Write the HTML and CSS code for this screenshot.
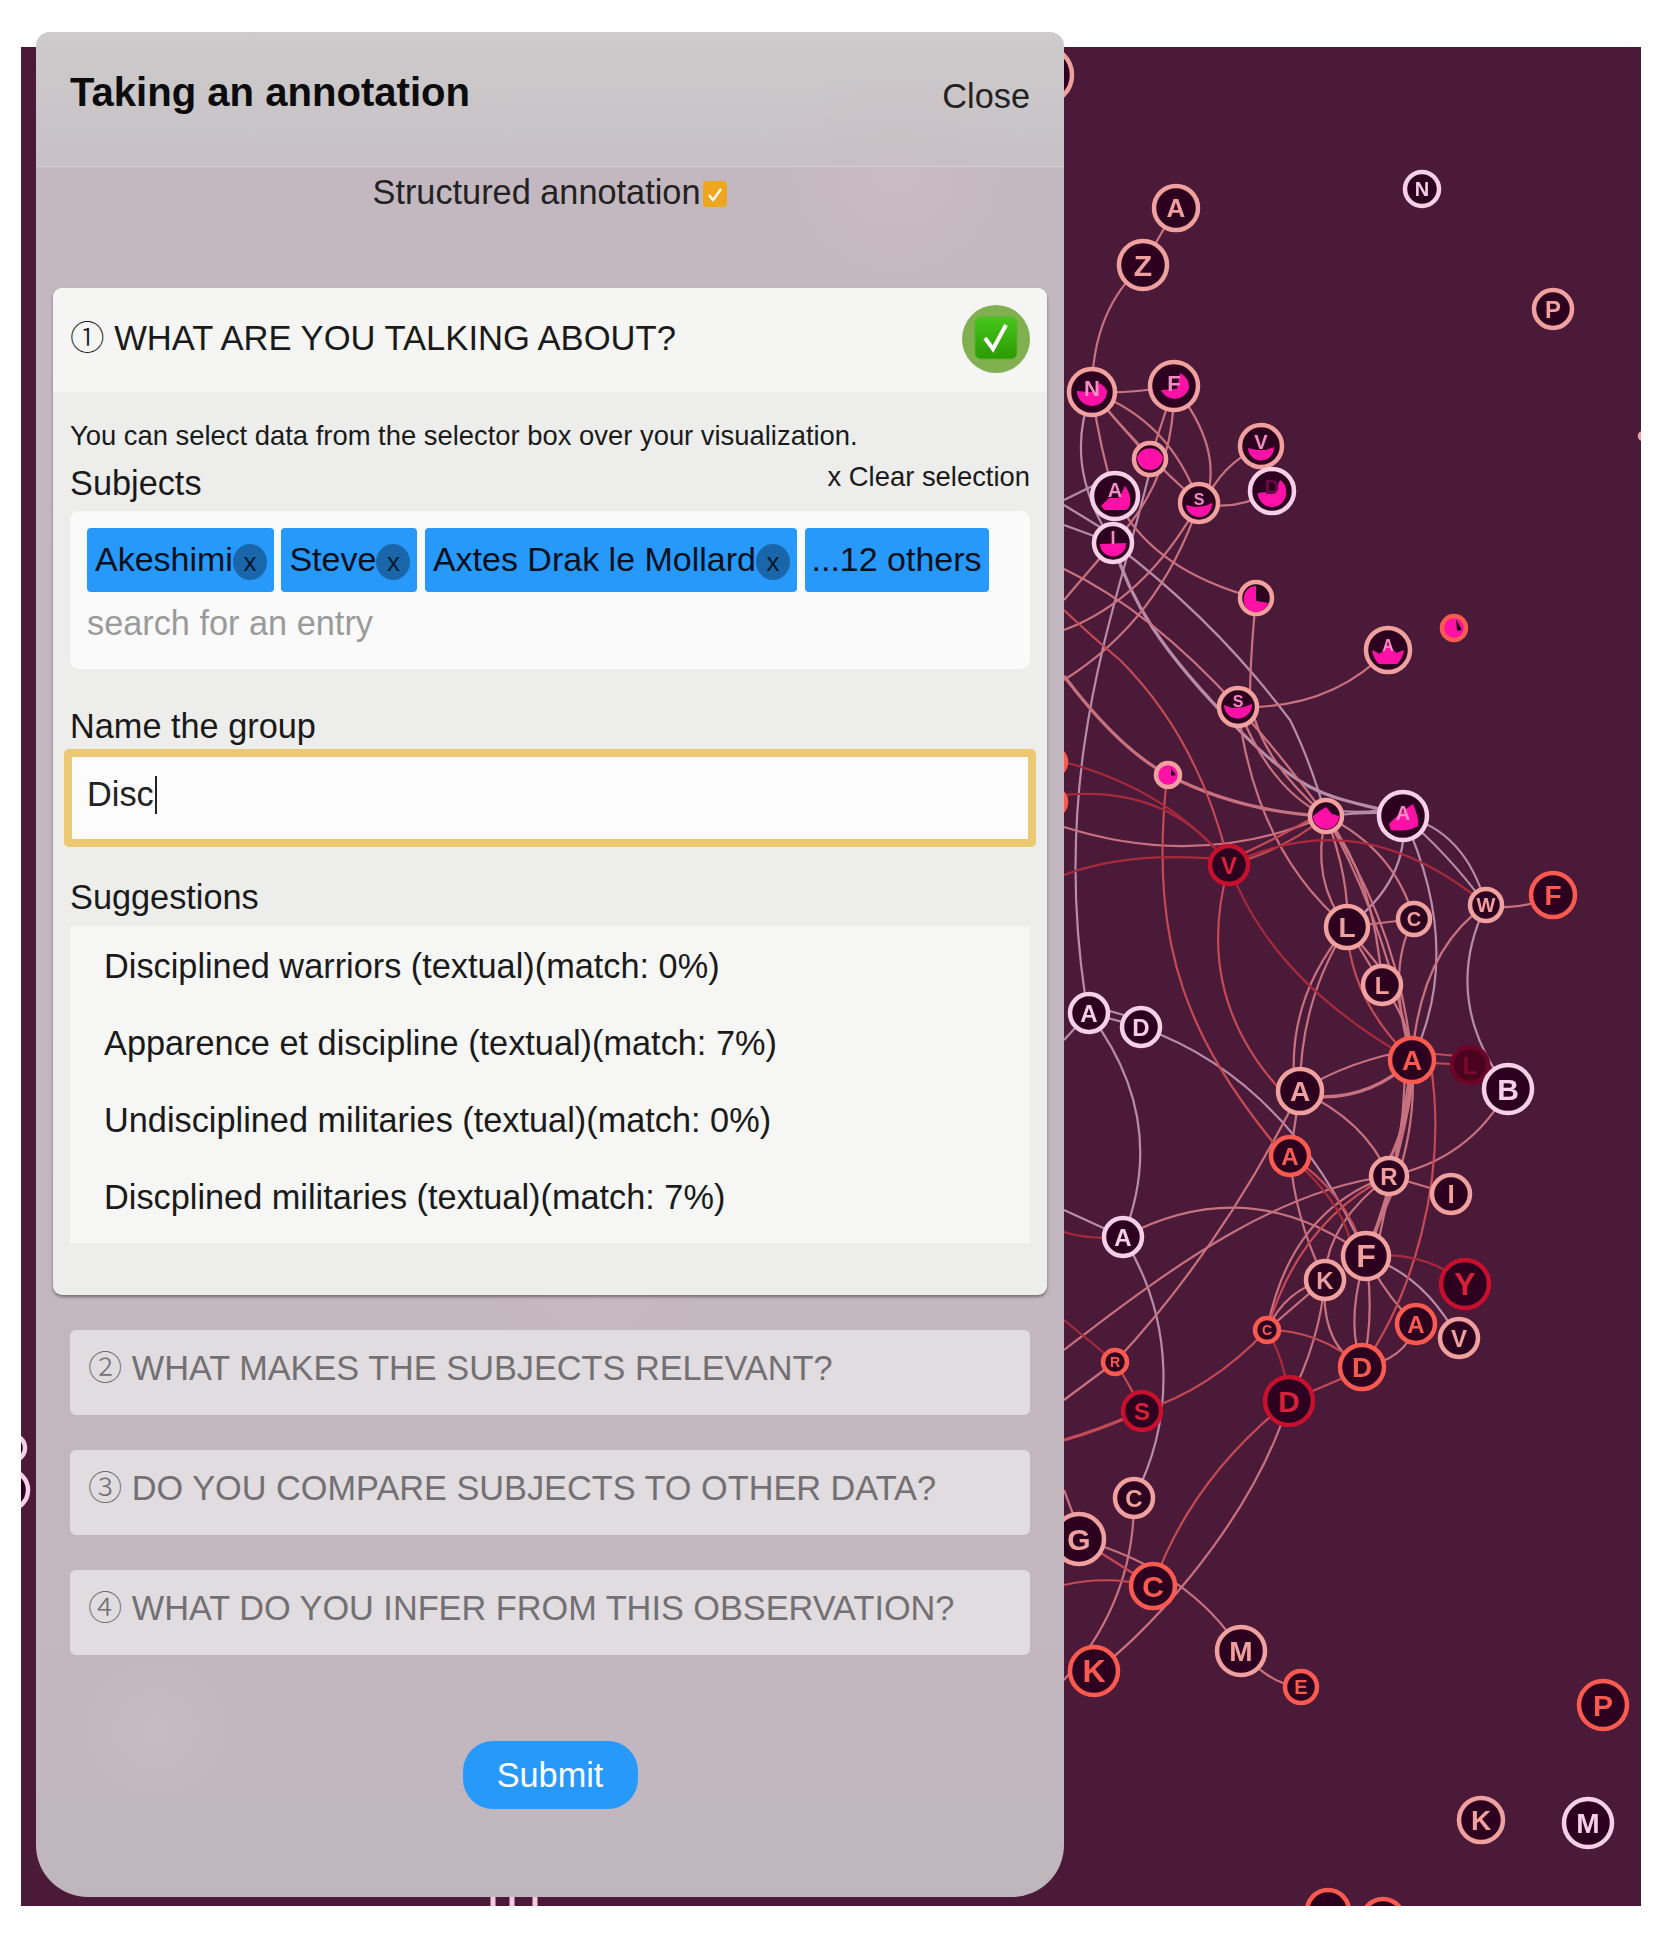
FILE: index.html
```html
<!DOCTYPE html>
<html lang="en">
<head>
<meta charset="utf-8">
<title>Taking an annotation</title>
<link rel="stylesheet" href="styles.css">
</head>
<body>
<main class="stage">
  <svg class="graph" viewBox="21 47 1620 1859" width="1620" height="1859" aria-hidden="true">
    <g class="edges pale-e">
      <path d="M1092 392Q1062 465 1113 543"/>
      <path class="thick" d="M1113 543C1130 600 1160 650 1238 729S1340 795 1403 816"/>
      <path d="M1064 1040L1089 1013"/>
      <path d="M1064 500L1115 475"/>
      <path d="M1064 525L1113 543"/>
      <path d="M1064 505L1113 535"/>
      <path d="M1089 1013Q1170 1120 1123 1237"/>
      <path d="M1141 1027Q1290 1080 1366 1256"/>
      <path d="M1089 1005L1141 1020"/>
      <path d="M1089 1013L1141 1027"/>
      <path d="M1123 1237C1175 1320 1175 1420 1134 1498"/>
      <path d="M1403 816Q1410 880 1347 927"/>
      <path d="M1403 816Q1465 830 1486 905"/>
      <path d="M1403 816Q1445 850 1486 905"/>
      <path d="M1403 816Q1465 950 1412 1060"/>
      <path d="M1326 816Q1385 810 1403 816"/>
      <path d="M1326 810Q1370 815 1403 806"/>
      <path d="M1486 905Q1440 1000 1508 1089"/>
      <path d="M1366 1256Q1425 1275 1459 1340"/>
      <path d="M1113 543Q1215 620 1290 720Q1310 760 1326 816"/>
      <path d="M1123 1237L1064 1210"/>
      <path d="M1150 470C1120 600 1050 760 1085 995"/>
    </g>
    <g class="edges pink-e">
      <path d="M1176 208L1143 265"/>
      <path d="M1143 265Q1092 310 1092 392"/>
      <path d="M1092 392Q1130 394 1174 386"/>
      <path d="M1092 392Q1170 420 1199 503"/>
      <path d="M1092 392L1150 459"/>
      <path d="M1092 392Q1140 450 1199 503"/>
      <path d="M1092 392Q1100 450 1115 496"/>
      <path d="M1174 386L1150 459"/>
      <path d="M1174 386Q1175 480 1113 543"/>
      <path d="M1174 386Q1225 450 1205 503"/>
      <path d="M1261 446Q1220 465 1205 503"/>
      <path d="M1272 491Q1235 512 1199 503"/>
      <path d="M1113 543L1064 600"/>
      <path d="M1199 503Q1160 620 1064 680"/>
      <path d="M1199 503Q1145 600 1064 630"/>
      <path d="M1115 496Q1150 570 1256 598"/>
      <path d="M1256 598Q1250 660 1250 700Q1260 760 1326 816"/>
      <path d="M1388 650Q1330 710 1238 707"/>
      <path d="M1064 569Q1150 610 1238 707"/>
      <path class="thick" d="M1168 775Q1240 812 1326 816"/>
      <path class="thick" d="M1064 676Q1120 750 1168 775"/>
      <path d="M1064 827Q1200 870 1326 816"/>
      <path d="M1238 707Q1255 850 1347 927"/>
      <path d="M1238 707Q1270 790 1326 816"/>
      <path d="M1238 707Q1285 760 1326 816"/>
      <path d="M1326 816Q1310 880 1347 927"/>
      <path d="M1326 816Q1395 850 1414 919"/>
      <path d="M1326 816Q1350 880 1347 927"/>
      <path d="M1326 816Q1375 880 1382 985"/>
      <path d="M1326 816Q1400 930 1412 1060"/>
      <path d="M1326 816Q1385 920 1412 1060"/>
      <path d="M1347 927L1414 919"/>
      <path d="M1347 927L1382 985"/>
      <path d="M1347 927L1382 970"/>
      <path d="M1347 927Q1285 1000 1295 1091"/>
      <path d="M1347 927Q1300 1000 1300 1091"/>
      <path d="M1414 919Q1385 970 1412 1060"/>
      <path d="M1382 985Q1410 1020 1412 1060"/>
      <path d="M1486 905Q1420 950 1412 1060"/>
      <path d="M1486 905Q1520 912 1553 895"/>
      <path d="M1300 1091Q1350 1060 1412 1050"/>
      <path class="thick" d="M1300 1095Q1365 1105 1412 1060"/>
      <path d="M1300 1091Q1365 1120 1389 1176"/>
      <path d="M1300 1091L1290 1156"/>
      <path d="M1508 1089Q1470 1160 1389 1176"/>
      <path d="M1389 1176L1451 1194"/>
      <path class="thick" d="M1412 1060Q1410 1130 1380 1176"/>
      <path d="M1416 1060Q1405 1150 1366 1256"/>
      <path d="M1405 1060Q1405 1170 1366 1256"/>
      <path d="M1412 1060Q1420 1160 1360 1256"/>
      <path d="M1412 1060Q1395 1170 1375 1256"/>
      <path d="M1123 1237Q1250 1170 1366 1256"/>
      <path d="M1290 1156Q1295 1220 1325 1280"/>
      <path d="M1300 1091Q1220 1250 1115 1362"/>
      <path d="M1389 1176C1280 1190 1180 1260 1064 1350"/>
      <path d="M1389 1176Q1290 1210 1267 1330"/>
      <path d="M1389 1176Q1325 1225 1325 1280"/>
      <path d="M1325 1280L1267 1330"/>
      <path d="M1325 1280Q1285 1290 1267 1330"/>
      <path d="M1366 1256Q1385 1295 1416 1325"/>
      <path d="M1366 1256Q1345 1320 1362 1367"/>
      <path d="M1366 1256Q1375 1320 1362 1367"/>
      <path d="M1325 1280Q1320 1345 1362 1367"/>
      <path d="M1325 1280Q1320 1340 1289 1401"/>
      <path d="M1362 1367Q1405 1360 1416 1325"/>
      <path d="M1289 1401C1250 1530 1130 1650 1094 1671"/>
      <path d="M1134 1498Q1135 1600 1064 1680"/>
      <path d="M1079 1539Q1190 1570 1241 1651"/>
      <path d="M1241 1651Q1270 1685 1301 1687"/>
      <path d="M1064 1400L1115 1362"/>
      <path d="M1064 1490L1079 1530"/>
    </g>
    <g class="edges coral-e">
      <path d="M1120 660Q1200 740 1229 865"/>
      <path d="M1064 610Q1090 635 1120 660"/>
      <path d="M1229 865Q1285 850 1326 816"/>
      <path d="M1229 860Q1285 835 1326 810"/>
      <path d="M1229 865Q1190 1000 1290 1100"/>
      <path d="M1166 786C1150 950 1190 1040 1276 1146"/>
      <path d="M1347 927Q1350 1000 1412 1060"/>
      <path d="M1290 1156Q1345 1190 1366 1256"/>
      <path d="M1430 1060C1450 1180 1410 1300 1362 1367"/>
      <path d="M1267 1330Q1320 1330 1362 1367"/>
      <path d="M1267 1330Q1210 1390 1142 1411"/>
      <path class="thick" d="M1142 1411Q1100 1430 1064 1440"/>
      <path d="M1289 1401L1362 1370"/>
      <path d="M1115 1362Q1130 1385 1142 1411"/>
      <path d="M1289 1401Q1190 1480 1153 1586"/>
      <path d="M1079 1539L1153 1586"/>
      <path d="M1153 1586Q1105 1575 1064 1585"/>
      <path d="M1412 1052L1470 1057"/>
      <path d="M1412 1062L1470 1065"/>
      <path d="M1389 1176Q1300 1220 1267 1330"/>
    </g>
    <g class="edges red-e">
      <path d="M1064 762Q1170 790 1229 865"/>
      <path d="M1064 795Q1170 785 1229 865"/>
      <path d="M1064 875Q1130 850 1229 860"/>
      <path d="M1229 865Q1360 800 1486 905"/>
      <path d="M1229 865Q1270 980 1412 1060"/>
      <path d="M1366 1256Q1425 1250 1465 1284"/>
      <path d="M1267 1330Q1285 1360 1289 1401"/>
      <path d="M1064 1320L1115 1362"/>
      <path d="M1123 1237Q1090 1240 1064 1232"/>
      <path d="M1290 1156Q1340 1200 1350 1240"/>
    </g>
    <g class="bars">
      <path d="M493 1890V1906"/>
      <path d="M512 1890V1906"/>
      <path d="M535 1890V1906"/>
    </g>
    <g class="nodes">
      <g class="n pink" transform="translate(1044 75)"><circle r="28"/></g>
      <g class="n coral" transform="translate(1052 762)"><circle r="14"/></g>
      <g class="n coral" transform="translate(1052 802)"><circle r="14"/></g>
      <g class="n pale" transform="translate(12 1448)"><circle r="13"/></g>
      <g class="n pale" transform="translate(8 1490)"><circle r="20"/></g>
      <g class="n pink" transform="translate(1643 436)"><circle r="3"/></g>
      <g class="n coral" transform="translate(1328 1911)"><circle r="21"/></g>
      <g class="n coral" transform="translate(1383 1920)"><circle r="21"/></g>

      <g class="n pink" transform="translate(1176 208)"><circle r="22"/><text font-size="26">A</text></g>
      <g class="n pink" transform="translate(1143 265)"><circle r="24"/><text font-size="30">Z</text></g>
      <g class="n pale" transform="translate(1422 189)"><circle r="17"/><text font-size="20">N</text></g>
      <g class="n pink" transform="translate(1553 309)"><circle r="19"/><text font-size="24">P</text></g>
      <g class="n pink" transform="translate(1092 392)"><circle r="23"/><path class="pie" d="M-15 -1A15 15 0 0 0 15 -1A15 15 0 0 0 7 -9L4 0H-4Z"/><text class="over" font-size="22" y="-4">N</text></g>
      <g class="n pink" transform="translate(1174 386)"><circle r="24"/><path class="pie" d="M-13 4L3 3L6 -13A15 15 0 0 1 15 2A15 15 0 0 1 -13 4Z"/><text class="over" font-size="22" y="-3">F</text></g>
      <g class="n pink" transform="translate(1261 446)"><circle r="21"/><path class="pie" d="M-13 2L-4 4L5 4L13 1A13 13 0 0 1 -13 2Z"/><text class="over" font-size="20" y="-4">V</text></g>
      <g class="n pale" transform="translate(1272 491)"><circle r="22"/><path class="pie" d="M-14 2L4 0L8 -11A14 14 0 0 1 14 2A14 14 0 0 1 -14 2Z"/><text class="over dark" font-size="20" y="-4">D</text></g>
      <g class="n pink" transform="translate(1150 459)"><circle r="16"/><path class="pie" d="M-13 -2A13 13 0 1 0 13 -2A14 14 0 0 0 -13 -2Z"/></g>
      <g class="n pale" transform="translate(1115 496)"><circle r="23"/><path class="pie" d="M-14 10L-6 2L4 2L10 -10Q16 -2 15 6Q15 12 11 14H-10Z"/><text class="over" font-size="20" y="-6">A</text></g>
      <g class="n pink" transform="translate(1199 503)"><circle r="19"/><path class="pie" d="M-13 2L-4 4L6 3L13 0A13 13 0 0 1 -13 2Z"/><text class="over" font-size="16" y="-4">S</text></g>
      <g class="n pale" transform="translate(1113 543)"><circle r="19"/><path class="pie" d="M-13 1L13 0A13 13 0 0 1 -13 1Z"/><text class="over" font-size="18" y="-5">I</text></g>
      <g class="n pink" transform="translate(1256 598)"><circle r="16"/><path class="pie" d="M-12 -1A12 12 0 1 0 12 5L0 3L0 -12A12 12 0 0 0 -12 -1Z"/></g>
      <g class="n coral" transform="translate(1454 628)"><circle class="fp" r="12"/><path class="wedge" d="M2 -9L8 2L3 3Z"/></g>
      <g class="n pink" transform="translate(1388 650)"><circle r="22"/><path class="pie" d="M-16 0L-8 4L0 -6L8 3L16 0Q14 10 9 14H-9Q-14 10 -16 0Z"/><text class="over" font-size="16" y="-5">A</text></g>
      <g class="n pink" transform="translate(1238 707)"><circle r="19"/><path class="pie" d="M-14 -2L-6 1L6 0L14 -3A14 14 0 0 1 -14 -2Z"/><text class="over" font-size="16" y="-6">S</text></g>
      <g class="n pink" transform="translate(1168 775)"><circle class="fp" r="12"/><path class="wedge" d="M3 -7L8 0L3 1Z"/></g>
      <g class="n pink" transform="translate(1326 816)"><circle r="16"/><path class="pie" d="M-13 0L-5 -6L0 -9L6 -2L13 0A13 13 0 0 1 -13 0Z"/></g>
      <g class="n pale" transform="translate(1403 816)"><circle r="24"/><path class="pie" d="M-14 8L-4 -2L10 -12Q16 2 15 10Q5 16 -12 14Z"/><text class="over" font-size="20" y="-3">A</text></g>
      <g class="n red" transform="translate(1229 865)"><circle r="19"/><text font-size="24">V</text></g>
      <g class="n coral" transform="translate(1553 895)"><circle r="22"/><text font-size="28">F</text></g>
      <g class="n pink" transform="translate(1486 905)"><circle r="16"/><text font-size="20">W</text></g>
      <g class="n pink" transform="translate(1347 927)"><circle r="21"/><text font-size="28">L</text></g>
      <g class="n pink" transform="translate(1414 919)"><circle r="16"/><text font-size="20">C</text></g>
      <g class="n pink" transform="translate(1382 985)"><circle r="19"/><text font-size="24">L</text></g>
      <g class="n pale" transform="translate(1089 1013)"><circle r="19"/><text font-size="24">A</text></g>
      <g class="n pale" transform="translate(1141 1027)"><circle r="19"/><text font-size="24">D</text></g>
      <g class="n coral" transform="translate(1412 1060)"><circle r="22"/><text font-size="28">A</text></g>
      <g class="n dim" transform="translate(1470 1065)"><circle r="18"/><text font-size="24">L</text></g>
      <g class="n pale" transform="translate(1508 1089)"><circle r="24"/><text font-size="30">B</text></g>
      <g class="n pink" transform="translate(1300 1091)"><circle r="22"/><text font-size="28">A</text></g>
      <g class="n coral" transform="translate(1290 1156)"><circle r="19"/><text font-size="24">A</text></g>
      <g class="n pink" transform="translate(1389 1176)"><circle r="18"/><text font-size="24">R</text></g>
      <g class="n pink" transform="translate(1451 1194)"><circle r="19"/><text font-size="26">I</text></g>
      <g class="n pale" transform="translate(1123 1237)"><circle r="19"/><text font-size="24">A</text></g>
      <g class="n pink" transform="translate(1325 1280)"><circle r="19"/><text font-size="24">K</text></g>
      <g class="n pink" transform="translate(1366 1256)"><circle r="23"/><text font-size="32">F</text></g>
      <g class="n red" transform="translate(1465 1284)"><circle r="24"/><text font-size="32">Y</text></g>
      <g class="n coral" transform="translate(1267 1330)"><circle r="12"/><text font-size="14">C</text></g>
      <g class="n coral" transform="translate(1115 1362)"><circle r="12"/><text font-size="14">R</text></g>
      <g class="n coral" transform="translate(1416 1324)"><circle r="19"/><text font-size="24">A</text></g>
      <g class="n pink" transform="translate(1459 1338)"><circle r="19"/><text font-size="24">V</text></g>
      <g class="n coral" transform="translate(1362 1367)"><circle r="22"/><text font-size="28">D</text></g>
      <g class="n red" transform="translate(1289 1401)"><circle r="24"/><text font-size="30">D</text></g>
      <g class="n red" transform="translate(1142 1411)"><circle r="19"/><text font-size="24">S</text></g>
      <g class="n pink" transform="translate(1134 1498)"><circle r="19"/><text font-size="24">C</text></g>
      <g class="n pink" transform="translate(1079 1539)"><circle r="25"/><text font-size="30">G</text></g>
      <g class="n coral" transform="translate(1153 1586)"><circle r="22"/><text font-size="30">C</text></g>
      <g class="n pink" transform="translate(1241 1651)"><circle r="24"/><text font-size="28">M</text></g>
      <g class="n coral" transform="translate(1301 1687)"><circle r="16"/><text font-size="20">E</text></g>
      <g class="n coral" transform="translate(1094 1671)"><circle r="24"/><text font-size="32">K</text></g>
      <g class="n coral" transform="translate(1603 1705)"><circle r="24"/><text font-size="30">P</text></g>
      <g class="n pink" transform="translate(1481 1820)"><circle r="22"/><text font-size="28">K</text></g>
      <g class="n pale" transform="translate(1588 1823)"><circle r="24"/><text font-size="28">M</text></g>
    </g>
  </svg>

  <section class="panel">
    <header class="panel-head">
      <h1 class="panel-title">Taking an annotation</h1>
      <span class="panel-close">Close</span>
    </header>
    <div class="mode">
      <span>Structured annotation</span>
      <svg class="mode-check" viewBox="0 0 24 26" width="24" height="26" aria-hidden="true">
        <rect width="24" height="26" rx="4" fill="#eca71f"/>
        <path d="M6 14l4 5 8-11" fill="none" stroke="#fff" stroke-width="2.4"/>
      </svg>
    </div>

    <article class="card">
      <div class="card-head">
        <h2 class="step"><span class="num">①</span> WHAT ARE YOU TALKING ABOUT?</h2>
        <svg class="done" viewBox="0 0 68 68" width="68" height="68" aria-hidden="true">
          <defs>
            <linearGradient id="tick" x1="0" y1="0" x2="0" y2="1">
              <stop offset="0" stop-color="#46c71a"/>
              <stop offset="1" stop-color="#2b9a04"/>
            </linearGradient>
          </defs>
          <circle cx="34" cy="34" r="34" fill="#80b04f"/>
          <rect x="13" y="12" width="42" height="42" rx="6" fill="url(#tick)" stroke="#5cb32f"/>
          <path d="M23 33l8 11 13-24" fill="none" stroke="#fff" stroke-width="4"/>
        </svg>
      </div>
      <div class="card-body">
        <p class="hint">You can select data from the selector box over your visualization.</p>
        <div class="subject-row">
          <label class="field-label">Subjects</label>
          <span class="clear">x Clear selection</span>
        </div>
        <div class="subject-box">
          <div class="chips">
            <span class="chip">Akeshimi<i class="chip-x">x</i></span>
            <span class="chip">Steve<i class="chip-x">x</i></span>
            <span class="chip">Axtes Drak le Mollard<i class="chip-x">x</i></span>
            <span class="chip chip-more">...12 others</span>
          </div>
          <div class="search">search for an entry</div>
        </div>
        <label class="field-label name-label">Name the group</label>
        <div class="name-input"><span>Disc</span><i class="caret"></i></div>
        <label class="field-label sug-label">Suggestions</label>
        <ul class="suggestions">
          <li>Disciplined warriors (textual)(match: 0%)</li>
          <li>Apparence et discipline (textual)(match: 7%)</li>
          <li>Undisciplined militaries (textual)(match: 0%)</li>
          <li>Discplined militaries (textual)(match: 7%)</li>
        </ul>
      </div>
    </article>

    <div class="closed"><span class="num">②</span> WHAT MAKES THE SUBJECTS RELEVANT?</div>
    <div class="closed"><span class="num">③</span> DO YOU COMPARE SUBJECTS TO OTHER DATA?</div>
    <div class="closed"><span class="num">④</span> WHAT DO YOU INFER FROM THIS OBSERVATION?</div>

    <button class="submit" type="button">Submit</button>
  </section>
</main>
</body>
</html>
```

FILE: styles.css
```css
* { box-sizing: border-box; }
html, body { margin: 0; padding: 0; background: #fff; }
body { width: 1667px; height: 1939px; overflow: hidden; font-family: "Liberation Sans", Arial, sans-serif; color: #111; font-size: 34.3px; }

.stage { position: relative; width: 1620px; height: 1859px; margin: 47px 0 0 21px; background: #4a1a38; }
.graph { display: block; filter: blur(.7px); }

.edges path { fill: none; stroke-width: 2.2; }
.edges path.thick { stroke-width: 3.2; }
.pale-e path { stroke: #b78da9; }
.pink-e path { stroke: #c9727f; }
.coral-e path { stroke: #c44a55; }
.red-e path { stroke: #a92a3c; }
.bars path { stroke: #f3c8e0; stroke-width: 5; }

.n circle { fill: #2d0020; stroke-width: 4.5; }
.n text { font-family: "Liberation Sans", Arial, sans-serif; font-weight: 700; text-anchor: middle; dominant-baseline: central; }
.pale circle { stroke: #f5d0e6; } .pale text { fill: #f5d0e6; }
.pink circle { stroke: #f0a09e; } .pink text { fill: #f0a09e; }
.coral circle { stroke: #fb5a50; } .coral text { fill: #fb5a50; }
.red circle { stroke: #c8102e; } .red text { fill: #d8203a; }
.dim circle { stroke: #6d0526; fill: #4a0420; } .dim text { fill: #7d0a2c; }
.n .pie { fill: #ff10a6; }
.n text.over { fill: #f48cc4; }
.n text.dark { fill: #6a0a48; }
.n circle.fp { fill: #ff10a6; }
.n .wedge { fill: #2d0020; }

.panel { position: absolute; left: 15px; top: -15px; width: 1028px; height: 1865px; display: flex; flex-direction: column; border-radius: 14px 14px 52px 52px; overflow: hidden;
  background:
    radial-gradient(circle 70px at 120px 1700px, rgba(208,194,200,.35), transparent),
    radial-gradient(circle 110px at 560px 1260px, rgba(205,185,190,.5), transparent),
    radial-gradient(circle 120px at 860px 140px, rgba(206,190,196,.5), transparent),
    linear-gradient(180deg, #cdcbcc 0, #c7c1c5 135px, #c4b8c0 136px, #c3b7bf 1700px, #bfb6bc 100%);
}
.panel-head { flex: none; height: 135px; display: flex; justify-content: space-between; align-items: flex-start; padding: 36px 34px 0; border-bottom: 1px solid #d3ced1; }
.panel-title { margin: 0; font-size: 40.1px; font-weight: 700; line-height: 48px; color: #0c0c0c; }
.panel-close { line-height: 40px; margin-top: 8px; color: #222; }

.mode { flex: none; display: flex; justify-content: center; align-items: center; gap: 3px; height: 40px; margin-top: 5px; margin-bottom: 1px; color: #222; }
.mode-check { display: block; margin-top: 4px; }

.card { flex: none; margin: 75px 17px 0; border-radius: 9px; background: #edeeec; box-shadow: 0 2px 3px rgba(60,50,55,.55); }
.card-head { height: 104px; display: flex; justify-content: space-between; align-items: center; padding: 0 17px; background: #f5f5f4; border-radius: 9px 9px 0 0; }
.step { margin: 0 0 7px; font-size: 34.6px; font-weight: 400; line-height: 40px; color: #1a1a1a; }
.num { font-family: "Noto Sans CJK JP", "DejaVu Sans", sans-serif; font-weight: 300; }
.done { display: block; margin-bottom: 2px; }

.card-body { padding: 28px 17px 52px; }
.hint { margin: 0; font-size: 27.4px; line-height: 32px; color: #1a1a1a; }
.subject-row { display: flex; justify-content: space-between; align-items: flex-start; height: 47px; margin-top: 11px; margin-bottom: 1px; }
.field-label { display: block; line-height: 40px; color: #1a1a1a; }
.clear { font-size: 27.4px; line-height: 28px; color: #1a1a1a; }

.subject-box { height: 158px; padding: 17px; background: #fafafa; border-radius: 9px; }
.chips { display: flex; gap: 7.5px; height: 64px; }
.chip { display: flex; align-items: center; padding: 0 7px 2px 8px; background: #2699fb; border-radius: 4px; color: #04101c; font-size: 34px; }
.chip-more { padding: 0 7px 2px; }
.chip-x { display: flex; justify-content: center; align-items: center; width: 34px; height: 36px; margin-top: 6px; border-radius: 50%; background: rgba(0,0,0,.32); font-size: 26px; font-style: normal; color: #07172a; }
.search { margin-top: 11px; line-height: 40px; color: #9a9a9a; }

.name-label { margin-top: 37px; }
.name-input { display: flex; align-items: center; height: 98px; margin: 3px -6px 0; padding: 0 15px 7px; background: #fcfcfc; border: 8px solid #edc872; border-radius: 5px; color: #222; }
.caret { display: block; width: 2px; height: 38px; margin-left: 1px; background: #222; }
.sug-label { margin-top: 30px; }
.suggestions { list-style: none; margin: 9px 0 0; padding: 2px 34px 7px; background: #f6f6f5; }
.suggestions li { height: 77px; line-height: 77px; color: #1a1a1a; }

.closed { flex: none; height: 85px; margin: 35px 34px 0; padding: 15px 18px 0; background: #e0dcdf; border-radius: 6px; line-height: 40px; color: #737073; }

.submit { flex: none; align-self: center; width: 175px; height: 68px; margin-top: 86px; border: 0; border-radius: 30px; background: #2699fb; color: #fff; font: 34.3px/1 "Liberation Sans", Arial, sans-serif; }
```
